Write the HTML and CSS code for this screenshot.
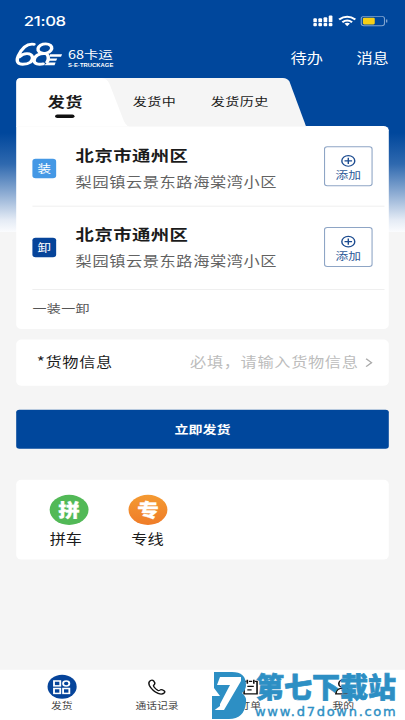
FILE: index.html
```html
<!DOCTYPE html>
<html lang="zh-CN">
<head>
<meta charset="utf-8">
<title>68卡运</title>
<link rel="stylesheet" href="styles.css">
</head>
<body>
<div class="screen">
<div class="app">
  <div class="status">
    <span class="time">21:08</span>
    <svg class="status-icons" width="70" height="14" viewBox="0 0 70 14">
      <g fill="#fff">
        <rect x="0" y="3.7" width="3.400" height="4.5" rx="1"/><rect x="4.800" y="3.7" width="3.400" height="4.5" rx="1"/>
        <rect x="9.600" y="2.5" width="3.400" height="5.7" rx="1"/><rect x="14.400" y="0.500" width="3.400" height="7.7" rx="1"/>
        <rect x="0" y="9" width="3.400" height="3.600" rx="1"/><rect x="4.800" y="9" width="3.400" height="3.600" rx="1"/>
        <rect x="9.600" y="9" width="3.400" height="3.600" rx="1"/><rect x="14.400" y="9" width="3.400" height="3.600" rx="1"/>
      </g>
      <g fill="none" stroke="#fff" stroke-width="2.2"><path d="M24 5Q31.500-1 39 5M27 8Q31.500 4.500 36 8"/></g>
      <path d="M29 9.600Q31.500 7.800 34 9.600L31.500 12.500Z" fill="#fff"/>
      <rect x="44.500" y="1.500" width="21.500" height="10.500" rx="2.500" fill="none" stroke="#7fa3cf"/>
      <rect x="46" y="3" width="11" height="7.500" rx="1.200" fill="#f7cf16"/>
      <path d="M68 5V8.500" stroke="#7fa3cf" stroke-width="1.300"/>
    </svg>
  </div>
  <header class="header">
    <svg class="logo" width="42" height="28" viewBox="0 0 42 28">
      <g fill="none" stroke="#fff" stroke-width="3.200" stroke-linecap="round" stroke-linejoin="round">
        <path d="M17.500 3C10 1.500 6 8 3 16C.5 23 3 25.500 7 25.500C13 25.500 17 22 16 17C15 12.500 8 12 4 17"/>
        <ellipse cx="27.500" cy="7.800" rx="6.500" ry="5.200" transform="rotate(-18 27.500 7.800)"/>
        <path d="M29 13.500C22 12.500 18 16 17.500 21C17.500 25.500 22 26 26 25M29 13.500C31.500 16 31 21 29.500 23"/>
      </g>
      <path d="M32.500 14.300H43.500L42.500 17H31.500ZM31.500 19H39L38 21.500H30.500ZM30 23.500H37.500L36.500 26.500H27Z" fill="#fff"/>
    </svg>
    <div class="brand"><div class="brand-name">68卡运</div><div class="brand-sub">S·E·TRUCKAGE</div></div>
    <nav class="links"><span>待办</span><span>消息</span></nav>
  </header>
  <nav class="tabs">
    <svg class="tabs-bg" width="284" height="55" viewBox="0 0 284 55">
      <path d="M0 55V5Q0 0 5 0H247Q251 0 253 4L268.500 55Z" fill="#f5f5f5"/>
      <path d="M0 55V5Q0 0 5 0H79Q84 0 86.500 7L98 43Q101 54 105 55Z" fill="#fff"/>
    </svg>
    <span class="tab active">发货</span><span class="tab second">发货中</span><span class="tab third">发货历史</span>
  </nav>
  <section class="card route">
    <div class="stop">
      <span class="badge load">装</span>
      <div class="place"><div class="city">北京市通州区</div><div class="address">梨园镇云景东路海棠湾小区</div></div>
      <div class="add"><svg width="15" height="15" viewBox="0 0 15 15"><path d="M7.500 4V11M4 7.500H11"/><circle cx="7.500" cy="7.500" r="6"/></svg><span>添加</span></div>
    </div>
    <div class="stop unload-stop">
      <span class="badge unload">卸</span>
      <div class="place"><div class="city">北京市通州区</div><div class="address">梨园镇云景东路海棠湾小区</div></div>
      <div class="add"><svg width="15" height="15" viewBox="0 0 15 15"><path d="M7.500 4V11M4 7.500H11"/><circle cx="7.500" cy="7.500" r="6"/></svg><span>添加</span></div>
    </div>
    <div class="summary">一装一卸</div>
  </section>
  <section class="card cargo">
    <span class="cargo-label"><span class="star">*</span>货物信息</span><span class="placeholder">必填，请输入货物信息</span>
    <svg width="8" height="12" viewBox="0 0 8 12"><path d="M1 1.500L6 6L1 10.500" fill="none" stroke="#aaa" stroke-width="1.400"/></svg>
  </section>
  <div class="submit">立即发货</div>
  <section class="card services">
    <div class="service"><span class="disc green">拼</span><span class="service-name">拼车</span></div>
    <div class="service"><span class="disc orange">专</span><span class="service-name wide">专线</span></div>
  </section>
  <nav class="bottom">
    <div class="item"><span class="icon home"><svg width="18" height="18" viewBox="0 0 18 18" fill="none" stroke="#fff" stroke-width="1.700"><rect x="2" y="2" width="5.800" height="5.500"/><circle cx="13.300" cy="4.800" r="2.900"/><rect x="2" y="10.500" width="5.800" height="5.500"/><rect x="10.400" y="10.500" width="5.800" height="5.500"/></svg></span><span>发货</span></div>
    <div class="item"><span class="icon"><svg width="18" height="20" viewBox="0 0 18 20" fill="none" stroke="#111" stroke-width="1.400" stroke-linejoin="round"><path d="M3.500 2.500Q5 1.500 6.300 3L7.300 5Q7.700 6.500 6.500 7.500Q5.700 8.300 6.500 9.500Q8 12 10 13.500Q11 14.200 12 13.300Q13 12.300 14.300 13L16.200 14.300Q17.200 15.500 16 16.600Q14 18.600 10.500 17Q5 14 2.300 8Q1 4.200 3.500 2.500Z"/></svg></span><span>通话记录</span></div>
    <div class="item"><span class="icon"><svg width="16" height="20" viewBox="0 0 16 20" fill="none" stroke="#111" stroke-width="1.500"><path d="M4 3.500H2V17.500H14V3.500H12M6.500 3.500H9.500M5 1.500V6M11 1.500V6M5 9H11M5 13H9"/></svg></span><span>订单</span></div>
    <div class="item"><span class="icon"><svg width="18" height="20" viewBox="0 0 18 20" fill="none" stroke="#111" stroke-width="1.500"><circle cx="9" cy="6" r="4.300"/><path d="M2 17.500Q2 11 9 11Q16 11 16 17.500Z"/></svg></span><span>我的</span></div>
  </nav>
</div>
<div class="watermark">
  <svg width="40" height="49" viewBox="0 0 40 49">
    <path d="M2 1H20Q34 1 34 14Q34 19 30 22Q35 26 34 32Q32 48 17 48H0V25H8L2 17Z" fill="#2d8fc4"/>
    <path d="M5 14L8 6H29V10L12 39H0V36L7 35L18 14Z" fill="#fff"/>
    <path d="M0 25H8V35L0 41Z" fill="#2d8fc4"/>
  </svg>
  <div class="mark-text"><div class="mark-name">第七下载站</div><div class="mark-url">www.d7down.com</div></div>
</div>
</div>
</body>
</html>
```
FILE: styles.css
```css
* { box-sizing: border-box; }
html, body { margin: 0; width: 405px; height: 720px; overflow: hidden; }
body { font-family: "Noto Sans CJK SC", sans-serif; background: #f5f5f5; }
.screen { position: relative; width: 405px; height: 720px; overflow: hidden; contain: strict; }
.app {
  width: 375px; height: 812px; transform: scale(1.08, .8867); transform-origin: 0 0;
  display: flex; flex-direction: column; color: #1b1b1b;
  background: linear-gradient(#00479c 0, #00479c 150px, #2f69af 185px, #8dacd3 218px, #e4ebf5 248px, #fbfcfe 262px, #f5f5f5 262px);
}
.status { height: 44px; flex: none; padding: 5px 10px 0 22px; display: flex; justify-content: space-between; align-items: center; }
.time { color: #fff; font: 500 15.5px/20px Inter, sans-serif; letter-spacing: -.3px; margin-top: -1px; }
.status-icons { margin-right: 5px; margin-top: -2px; }
.header { height: 44px; flex: none; display: flex; padding: 0 14px; color: #fff; }
.logo { margin-top: 3px; overflow: visible; }
.brand { margin: 9px 0 0 7px; }
.brand-name { font-size: 13.3px; line-height: 18px; }
.brand-sub { font: bold 5.4px/7px "Liberation Sans", sans-serif; white-space: nowrap; letter-spacing: .05px; }
.links { margin-left: auto; padding-top: 11px; margin-right: 1px; display: flex; gap: 31px; font-size: 15px; line-height: 20px; }
.tabs { height: 54px; flex: none; margin-left: 15px; position: relative; display: flex; align-items: flex-start; padding-left: 29px; }
.tabs-bg { position: absolute; left: 0; top: 0; }
.tab { position: relative; line-height: 20px; font-size: 13px; margin-top: 17px; letter-spacing: .4px; white-space: nowrap; }
.active { font-size: 16px; font-weight: bold; width: 34px; margin-top: 16px; }
.active::after { content: ""; display: block; width: 18px; height: 4px; border-radius: 2px; background: #111; margin: 5px 0 0 7px; }
.second { margin-left: 45px; }
.third { margin-left: 32px; }
.card { background: #fff; border-radius: 5px; margin: 0 15px; flex: none; }
.route { border-top-left-radius: 0; height: 229px; }
.stop { height: 91px; display: flex; padding: 23px 15px 0; position: relative; }
.unload-stop { height: 94px; }
.unload-stop .place { margin-top: -2px; }
.unload-stop .badge { margin-top: 12px; }
.stop::after { content: ""; position: absolute; left: 15px; right: 4px; bottom: 0; height: 1px; background: #ededed; }
.badge { width: 22px; height: 22px; margin-top: 14px; border-radius: 3px; color: #fff; font-size: 12.5px; line-height: 21px; text-align: center; }
.load { background: #4498e5; }
.unload { background: #06449a; }
.place { margin-left: 18px; white-space: nowrap; }
.city { font-size: 17px; font-weight: bold; line-height: 24px; letter-spacing: .4px; margin-top: -2px; }
.address { font-size: 15px; line-height: 22px; letter-spacing: .55px; margin-top: 7px; color: #626262; }
.add { width: 45px; height: 45px; margin-left: auto; border: 1px solid #8ea5c5; border-radius: 3px; color: #2e5b99; font-size: 11.8px; line-height: 16px; text-align: center; display: flex; flex-direction: column; align-items: center; padding-top: 8px; }
.add svg { flex: none; fill: none; stroke: #1d4c90; stroke-width: 1.3; }
.summary { padding: 11px 15px; font-size: 13px; line-height: 20px; letter-spacing: .3px; color: #555; }
.cargo { height: 52px; margin-top: 12px; padding: 0 14px 0 19px; display: flex; align-items: center; font-size: 15px; line-height: 22px; letter-spacing: .6px; }
.cargo-label, .placeholder { margin-top: -2px; }
.star { font-size: 16px; line-height: 20px; }
.placeholder { margin-left: auto; margin-right: 6px; color: #bcbcbc; white-space: nowrap; }
.submit { height: 44px; flex: none; margin: 27px 15px 0; border-radius: 3px; background: #00479c; color: #fff; text-align: center; font-size: 13px; line-height: 43px; font-weight: bold; }
.services { height: 90px; margin-top: 35px; padding: 17px 31px; display: flex; gap: 37px; }
.service { width: 36px; display: flex; flex-direction: column; align-items: center; font-size: 15px; line-height: 29px; white-space: nowrap; }
.service-name { margin-left: -6px; }
.wide { margin-left: -1px; }
.disc { width: 36px; height: 36px; border-radius: 50%; color: #fff; font-size: 20px; line-height: 34px; text-align: center; font-weight: 900; -webkit-text-stroke: .3px #fff; }
.green { background: #52b957; }
.orange { background: linear-gradient(#f49a32, #ef7c28); }
.bottom { margin-top: auto; height: 58px; flex: none; background: #fff; border-top: 1px solid #eee; padding: 6px 14px 0; display: flex; }
.item { flex: 1; display: flex; flex-direction: column; align-items: center; font-size: 10px; line-height: 16px; color: #444; }
.item:nth-child(2) { padding-left: 2px; }
.icon { width: 27px; height: 27px; display: flex; align-items: center; justify-content: center; }
.home { background: #06449a; border-radius: 50%; }
.watermark { position: absolute; left: 212px; top: 671px; width: 193px; height: 49px; display: flex; color: #2d8fc4; }
.mark-text { margin-left: 4px; white-space: nowrap; }
.mark-name { font-size: 28px; line-height: 32px; font-weight: 900; -webkit-text-stroke: .7px #2d8fc4; margin-top: -1px; }
.mark-url { font: 13px/15px "DejaVu Sans", sans-serif; -webkit-text-stroke: .4px #2d8fc4; letter-spacing: 1.72px; margin: 2px 0 0 -1px; }
```
